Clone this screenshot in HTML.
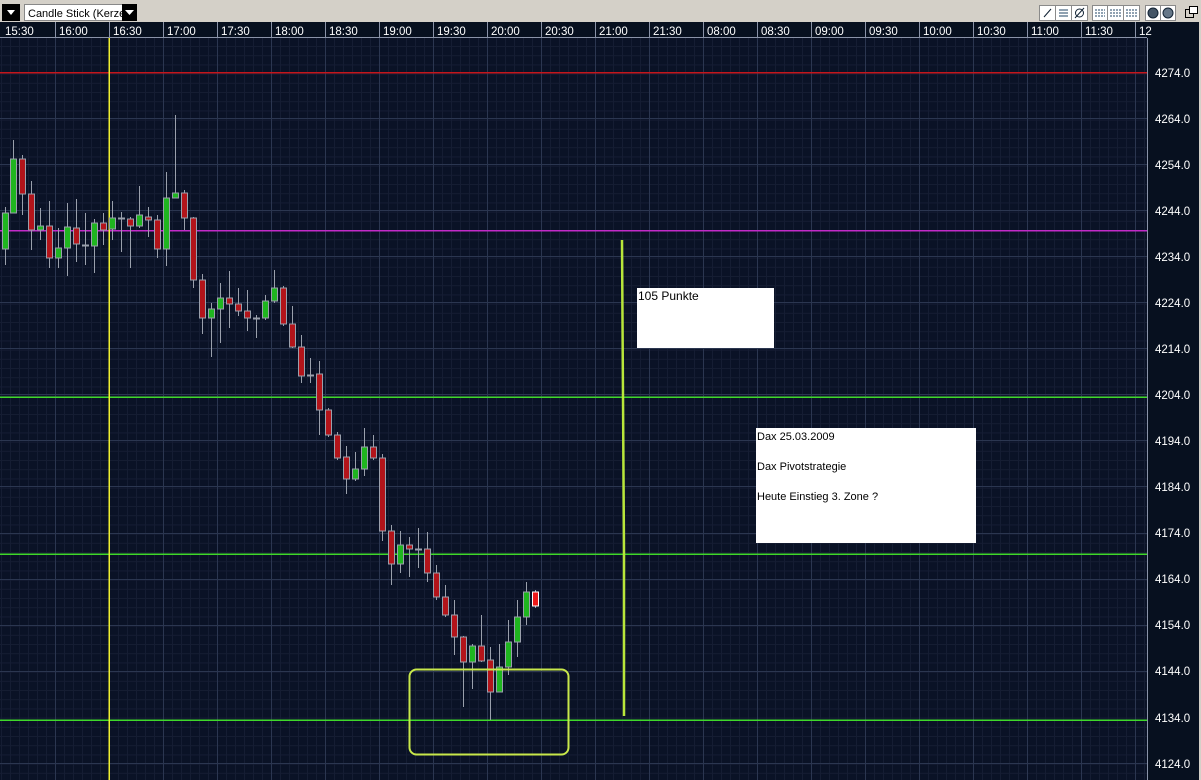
<!DOCTYPE html>
<html><head><meta charset="utf-8"><style>
html,body{margin:0;padding:0;width:1201px;height:780px;overflow:hidden;background:#d4d0c8;font-family:"Liberation Sans",sans-serif}
</style></head><body>
<svg width="1201" height="780" viewBox="0 0 1201 780" xmlns="http://www.w3.org/2000/svg" style="position:absolute;left:0;top:0" font-family="Liberation Sans, sans-serif">
<defs>
<pattern id="minv" x="1" y="0" width="9" height="9.2" patternUnits="userSpaceOnUse">
<rect x="0" y="0" width="1" height="9.2" fill="#151d33"/><rect x="0" y="0" width="9" height="1" fill="#151d33"/>
</pattern>
</defs>
<rect x="0" y="0" width="1201" height="22" fill="#d4d0c8"/>
<rect x="0" y="22" width="1201" height="758" fill="#07101f"/>
<rect x="0" y="38" width="1147" height="742" fill="#0a1226"/>
<rect x="0" y="38" width="1147" height="742" fill="url(#minv)"/>
<g fill="#2b3650">
<rect x="0" y="118" width="1147" height="1"/><rect x="0" y="164" width="1147" height="1"/><rect x="0" y="210" width="1147" height="1"/><rect x="0" y="256" width="1147" height="1"/><rect x="0" y="302" width="1147" height="1"/><rect x="0" y="348" width="1147" height="1"/><rect x="0" y="394" width="1147" height="1"/><rect x="0" y="440" width="1147" height="1"/><rect x="0" y="486" width="1147" height="1"/><rect x="0" y="533" width="1147" height="1"/><rect x="0" y="579" width="1147" height="1"/><rect x="0" y="625" width="1147" height="1"/><rect x="0" y="671" width="1147" height="1"/><rect x="0" y="763" width="1147" height="1"/>
</g>
<g fill="#2b3650">
<rect x="55" y="38" width="1" height="742"/><rect x="163" y="38" width="1" height="742"/><rect x="217" y="38" width="1" height="742"/><rect x="271" y="38" width="1" height="742"/><rect x="325" y="38" width="1" height="742"/><rect x="379" y="38" width="1" height="742"/><rect x="433" y="38" width="1" height="742"/><rect x="487" y="38" width="1" height="742"/><rect x="541" y="38" width="1" height="742"/><rect x="595" y="38" width="1" height="742"/><rect x="649" y="38" width="1" height="742"/><rect x="703" y="38" width="1" height="742"/><rect x="757" y="38" width="1" height="742"/><rect x="811" y="38" width="1" height="742"/><rect x="865" y="38" width="1" height="742"/><rect x="919" y="38" width="1" height="742"/><rect x="973" y="38" width="1" height="742"/><rect x="1027" y="38" width="1" height="742"/><rect x="1081" y="38" width="1" height="742"/><rect x="1135" y="38" width="1" height="742"/>
</g>
<rect x="1147" y="38" width="1" height="742" fill="#8a93a8"/>
<rect x="0" y="22" width="1147" height="16" fill="#07101f"/>
<rect x="0" y="37" width="1147" height="1" fill="#8a93a8"/>
<g fill="#8a93a8"><rect x="55" y="22" width="1" height="16"/><rect x="109" y="22" width="1" height="16"/><rect x="163" y="22" width="1" height="16"/><rect x="217" y="22" width="1" height="16"/><rect x="271" y="22" width="1" height="16"/><rect x="325" y="22" width="1" height="16"/><rect x="379" y="22" width="1" height="16"/><rect x="433" y="22" width="1" height="16"/><rect x="487" y="22" width="1" height="16"/><rect x="541" y="22" width="1" height="16"/><rect x="595" y="22" width="1" height="16"/><rect x="649" y="22" width="1" height="16"/><rect x="703" y="22" width="1" height="16"/><rect x="757" y="22" width="1" height="16"/><rect x="811" y="22" width="1" height="16"/><rect x="865" y="22" width="1" height="16"/><rect x="919" y="22" width="1" height="16"/><rect x="973" y="22" width="1" height="16"/><rect x="1027" y="22" width="1" height="16"/><rect x="1081" y="22" width="1" height="16"/><rect x="1135" y="22" width="1" height="16"/></g>
<g fill="#ffffff" font-size="11.5">
<text x="5" y="35">15:30</text><text x="59" y="35">16:00</text><text x="113" y="35">16:30</text><text x="167" y="35">17:00</text><text x="221" y="35">17:30</text><text x="275" y="35">18:00</text><text x="329" y="35">18:30</text><text x="383" y="35">19:00</text><text x="437" y="35">19:30</text><text x="491" y="35">20:00</text><text x="545" y="35">20:30</text><text x="599" y="35">21:00</text><text x="653" y="35">21:30</text><text x="707" y="35">08:00</text><text x="761" y="35">08:30</text><text x="815" y="35">09:00</text><text x="869" y="35">09:30</text><text x="923" y="35">10:00</text><text x="977" y="35">10:30</text><text x="1031" y="35">11:00</text><text x="1085" y="35">11:30</text><text x="1139" y="35">12</text>
</g>
<g fill="#ffffff" font-size="11.5">
<text x="1155" y="77">4274.0</text><text x="1155" y="123">4264.0</text><text x="1155" y="169">4254.0</text><text x="1155" y="215">4244.0</text><text x="1155" y="261">4234.0</text><text x="1155" y="307">4224.0</text><text x="1155" y="353">4214.0</text><text x="1155" y="399">4204.0</text><text x="1155" y="445">4194.0</text><text x="1155" y="491">4184.0</text><text x="1155" y="537">4174.0</text><text x="1155" y="583">4164.0</text><text x="1155" y="629">4154.0</text><text x="1155" y="675">4144.0</text><text x="1155" y="722">4134.0</text><text x="1155" y="768">4124.0</text>
</g>
<rect x="1199" y="22" width="2" height="758" fill="#d4d0c8"/>
<rect x="0" y="72" width="1147" height="1.5" fill="#c4161c"/>
<rect x="0" y="230" width="1147" height="1.5" fill="#c22ac8"/>
<rect x="0" y="396.5" width="1147" height="1.5" fill="#3fd82a"/>
<rect x="0" y="553.5" width="1147" height="1.5" fill="#3fd82a"/>
<rect x="0" y="719.5" width="1147" height="1.5" fill="#3fd82a"/>
<rect x="108.5" y="38" width="1.5" height="742" fill="#f0f030"/>
<g stroke="#9aa0ac" stroke-width="1">
<line x1="5.5" y1="207" x2="5.5" y2="265"/><line x1="13.5" y1="140" x2="13.5" y2="213"/><line x1="22.5" y1="155" x2="22.5" y2="215"/><line x1="31.5" y1="181" x2="31.5" y2="250"/><line x1="40.5" y1="208" x2="40.5" y2="240"/><line x1="49.5" y1="201" x2="49.5" y2="268"/><line x1="58.5" y1="228" x2="58.5" y2="268"/><line x1="67.5" y1="203" x2="67.5" y2="276"/><line x1="76.5" y1="199" x2="76.5" y2="262"/><line x1="85.5" y1="213" x2="85.5" y2="265"/><line x1="94.5" y1="219" x2="94.5" y2="273"/><line x1="103.5" y1="213" x2="103.5" y2="245"/><line x1="112.5" y1="201" x2="112.5" y2="240"/><line x1="121.5" y1="212" x2="121.5" y2="252"/><line x1="130.5" y1="217" x2="130.5" y2="268"/><line x1="139.5" y1="186" x2="139.5" y2="228"/><line x1="148.5" y1="207" x2="148.5" y2="237"/><line x1="157.5" y1="215" x2="157.5" y2="258"/><line x1="166.5" y1="172" x2="166.5" y2="266"/><line x1="175.5" y1="115" x2="175.5" y2="198"/><line x1="184.5" y1="190" x2="184.5" y2="230"/><line x1="193.5" y1="217" x2="193.5" y2="288"/><line x1="202.5" y1="274" x2="202.5" y2="334"/><line x1="211.5" y1="303" x2="211.5" y2="357"/><line x1="220.5" y1="283" x2="220.5" y2="343"/><line x1="229.5" y1="271" x2="229.5" y2="328"/><line x1="238.5" y1="288" x2="238.5" y2="316"/><line x1="247.5" y1="290" x2="247.5" y2="331"/><line x1="256.5" y1="315" x2="256.5" y2="338"/><line x1="265.5" y1="295" x2="265.5" y2="320"/><line x1="274.5" y1="270" x2="274.5" y2="303"/><line x1="283.5" y1="286" x2="283.5" y2="326"/><line x1="292.5" y1="306" x2="292.5" y2="348"/><line x1="301.5" y1="335" x2="301.5" y2="383"/><line x1="310.5" y1="358" x2="310.5" y2="383"/><line x1="319.5" y1="361" x2="319.5" y2="435"/><line x1="328.5" y1="408" x2="328.5" y2="437"/><line x1="337.5" y1="432" x2="337.5" y2="460"/><line x1="346.5" y1="446" x2="346.5" y2="494"/><line x1="355.5" y1="452" x2="355.5" y2="481"/><line x1="364.5" y1="428" x2="364.5" y2="476"/><line x1="373.5" y1="435" x2="373.5" y2="460"/><line x1="382.5" y1="454" x2="382.5" y2="541"/><line x1="391.5" y1="525" x2="391.5" y2="585"/><line x1="400.5" y1="531" x2="400.5" y2="573"/><line x1="409.5" y1="537" x2="409.5" y2="577"/><line x1="418.5" y1="528" x2="418.5" y2="568"/><line x1="427.5" y1="532" x2="427.5" y2="582"/><line x1="436.5" y1="565" x2="436.5" y2="600"/><line x1="445.5" y1="585" x2="445.5" y2="617"/><line x1="454.5" y1="600" x2="454.5" y2="655"/><line x1="463.5" y1="636" x2="463.5" y2="707"/><line x1="472.5" y1="644" x2="472.5" y2="689"/><line x1="481.5" y1="615" x2="481.5" y2="662"/><line x1="490.5" y1="647" x2="490.5" y2="720"/><line x1="499.5" y1="644" x2="499.5" y2="692"/><line x1="508.5" y1="620" x2="508.5" y2="675"/><line x1="517.5" y1="600" x2="517.5" y2="657"/><line x1="526.5" y1="582" x2="526.5" y2="625"/><line x1="535.5" y1="590" x2="535.5" y2="608"/>
</g>
<g stroke="#9aa0ac" stroke-width="1">
<g fill="#1fb51f">
<rect x="2.5" y="213" width="6" height="36"/><rect x="10.5" y="159" width="6" height="54"/><rect x="37.5" y="226" width="6" height="4"/><rect x="55.5" y="248" width="6" height="10"/><rect x="64.5" y="227" width="6" height="21"/><rect x="91.5" y="223" width="6" height="23"/><rect x="109.5" y="218" width="6" height="11"/><rect x="136.5" y="215" width="6" height="11"/><rect x="163.5" y="198" width="6" height="51"/><rect x="172.5" y="193" width="6" height="5"/><rect x="208.5" y="309" width="6" height="9"/><rect x="217.5" y="298" width="6" height="11"/><rect x="262.5" y="301" width="6" height="17"/><rect x="271.5" y="288" width="6" height="13"/><rect x="352.5" y="469" width="6" height="10"/><rect x="361.5" y="447" width="6" height="22"/><rect x="397.5" y="545" width="6" height="19"/><rect x="469.5" y="646" width="6" height="16"/><rect x="496.5" y="667" width="6" height="25"/><rect x="505.5" y="642" width="6" height="25"/><rect x="514.5" y="617" width="6" height="25"/><rect x="523.5" y="592" width="6" height="25"/>
</g>
<g fill="#b3141a">
<rect x="19.5" y="159" width="6" height="35"/><rect x="28.5" y="194" width="6" height="36"/><rect x="46.5" y="226" width="6" height="32"/><rect x="73.5" y="228" width="6" height="16"/><rect x="100.5" y="223" width="6" height="7"/><rect x="127.5" y="219" width="6" height="7"/><rect x="145.5" y="217" width="6" height="3"/><rect x="154.5" y="220" width="6" height="29"/><rect x="181.5" y="193" width="6" height="25"/><rect x="190.5" y="218" width="6" height="62"/><rect x="199.5" y="280" width="6" height="38"/><rect x="226.5" y="298" width="6" height="6"/><rect x="235.5" y="304" width="6" height="7"/><rect x="244.5" y="311" width="6" height="7"/><rect x="280.5" y="288" width="6" height="36"/><rect x="289.5" y="324" width="6" height="23"/><rect x="298.5" y="347" width="6" height="29"/><rect x="316.5" y="374" width="6" height="36"/><rect x="325.5" y="410" width="6" height="25"/><rect x="334.5" y="435" width="6" height="23"/><rect x="343.5" y="457" width="6" height="22"/><rect x="370.5" y="447" width="6" height="11"/><rect x="379.5" y="458" width="6" height="73"/><rect x="388.5" y="531" width="6" height="33"/><rect x="406.5" y="545" width="6" height="4"/><rect x="424.5" y="549" width="6" height="24"/><rect x="433.5" y="573" width="6" height="24"/><rect x="442.5" y="597" width="6" height="18"/><rect x="451.5" y="615" width="6" height="22"/><rect x="460.5" y="637" width="6" height="25"/><rect x="478.5" y="646" width="6" height="15"/><rect x="487.5" y="660" width="6" height="32"/>
</g>
<g fill="#9aa0ac"><rect x="82.5" y="245" width="6" height="1"/><rect x="118.5" y="218" width="6" height="1"/><rect x="253.5" y="318" width="6" height="1"/><rect x="307.5" y="375" width="6" height="1"/><rect x="415.5" y="549" width="6" height="1"/></g>
<rect x="532.5" y="592" width="6" height="14" fill="#ee1a1a" stroke="#ffffff"/>
</g>
<path d="M622 240 L623 397 L624 554 L624 716" stroke="#b8e63a" stroke-width="2.5" fill="none"/>
<rect x="409.5" y="669.5" width="159" height="85" rx="7" fill="none" stroke="#c8e84a" stroke-width="2"/>
<rect x="637" y="288" width="137" height="60" fill="#ffffff"/>
<text x="638" y="300" font-size="12" fill="#000">105 Punkte</text>
<rect x="756" y="428" width="220" height="115" fill="#ffffff"/>
<g font-size="11" fill="#000"><text x="757" y="440">Dax 25.03.2009</text><text x="757" y="470">Dax Pivotstrategie</text><text x="757" y="500">Heute Einstieg 3. Zone ?</text></g>
<rect x="2" y="4" width="18" height="17" fill="#000"/>
<path d="M7 10 L15 10 L11 15 Z" fill="#fff"/>
<rect x="24.5" y="4.5" width="112" height="16" fill="#fff" stroke="#888"/>
<text x="28" y="17" font-size="11" fill="#000">Candle Stick (Kerze</text>
<rect x="122" y="4" width="15" height="17" fill="#000"/>
<path d="M125 10 L134 10 L129.5 15 Z" fill="#fff"/>
<g fill="#fff" stroke="#8a8a8a">
<rect x="1039.5" y="5.5" width="16" height="15"/><rect x="1055.5" y="5.5" width="16" height="15"/><rect x="1071.5" y="5.5" width="16" height="15"/>
<rect x="1092.5" y="5.5" width="15" height="15"/><rect x="1107.5" y="5.5" width="16" height="15"/><rect x="1123.5" y="5.5" width="16" height="15"/>
<rect x="1145.5" y="5.5" width="15" height="15"/><rect x="1160.5" y="5.5" width="15" height="15"/>
</g>
<g stroke="#123" fill="none" stroke-width="1">
<line x1="1044" y1="17" x2="1051" y2="9"/>
<path d="M1059 10h9M1059 13h9M1059 16h9" stroke="#246"/>
<circle cx="1079.5" cy="13" r="4"/><line x1="1075" y1="18" x2="1084" y2="8"/>
<path d="M1095 10h10M1095 13h10M1095 16h10M1110 10h11M1110 13h11M1110 16h11M1126 10h11M1126 13h11M1126 16h11" stroke="#246" stroke-dasharray="2 1"/>
<circle cx="1153" cy="13" r="5" fill="#456"/><circle cx="1168" cy="13" r="5" fill="#678"/>
<rect x="1185.5" y="9.5" width="8" height="8" stroke="#000"/><rect x="1189.5" y="6.5" width="8" height="7" fill="#fff" stroke="#000"/>
</g>
</svg>
</body></html>
